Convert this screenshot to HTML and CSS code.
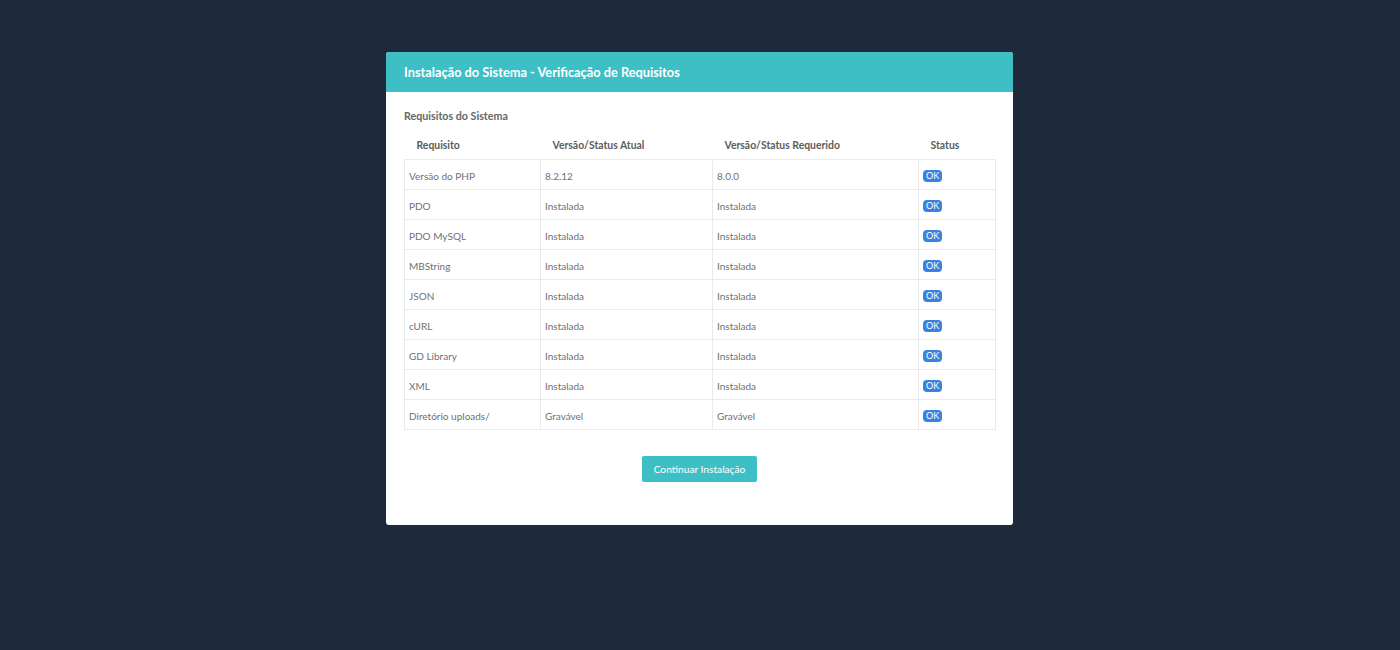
FILE: index.html
```html
<!DOCTYPE html>
<html lang="pt-BR">
<head>
    <meta charset="UTF-8">
    <meta name="viewport" content="width=device-width, initial-scale=1.0">
    <title>Instalação do Sistema</title>
    <link rel="stylesheet" href="styles.css">
</head>
<body>
    <div class="card">
        <div class="card-header">
            <h1>Instalação do Sistema - Verificação de Requisitos</h1>
        </div>
        <div class="card-body">
            <h2>Requisitos do Sistema</h2>
            <table class="req-table">
                <thead>
                    <tr>
                        <th class="c1">Requisito</th>
                        <th class="c2">Versão/Status Atual</th>
                        <th class="c3">Versão/Status Requerido</th>
                        <th class="c4">Status</th>
                    </tr>
                </thead>
                <tbody>
                    <tr><td>Versão do PHP</td><td>8.2.12</td><td>8.0.0</td><td><span class="badge">OK</span></td></tr>
                    <tr><td>PDO</td><td>Instalada</td><td>Instalada</td><td><span class="badge">OK</span></td></tr>
                    <tr><td>PDO MySQL</td><td>Instalada</td><td>Instalada</td><td><span class="badge">OK</span></td></tr>
                    <tr><td>MBString</td><td>Instalada</td><td>Instalada</td><td><span class="badge">OK</span></td></tr>
                    <tr><td>JSON</td><td>Instalada</td><td>Instalada</td><td><span class="badge">OK</span></td></tr>
                    <tr><td>cURL</td><td>Instalada</td><td>Instalada</td><td><span class="badge">OK</span></td></tr>
                    <tr><td>GD Library</td><td>Instalada</td><td>Instalada</td><td><span class="badge">OK</span></td></tr>
                    <tr><td>XML</td><td>Instalada</td><td>Instalada</td><td><span class="badge">OK</span></td></tr>
                    <tr><td>Diretório uploads/</td><td>Gravável</td><td>Gravável</td><td><span class="badge">OK</span></td></tr>
                </tbody>
            </table>
            <div class="actions">
                <button class="btn">Continuar Instalação</button>
            </div>
        </div>
    </div>
</body>
</html>
```

FILE: styles.css
```css
:root {
    --teal: #3dbfc5;
    --bg-dark: #1e293b;
    --badge-blue: #3a82e0;
    --line: #e8eaec;
}

body {
    background-color: var(--bg-dark);
    font-family: Lato, 'Noto Sans', sans-serif;
    margin: 0;
    min-height: 100vh;
    padding-top: 52px;
    box-sizing: border-box;
}

.card {
    width: 627px;
    margin-left: 386px;
    background: #fff;
    border-radius: 3px;
    overflow: hidden;
}

.card-header {
    background: var(--teal);
    height: 40px;
    display: flex;
    align-items: center;
    padding: 0 18px;
}

.card-header h1 {
    margin: 0;
    color: #fff;
    font-size: 12.8px;
    font-weight: bold;
}

.card-body {
    padding: 17px 18px 43px;
}

.card-body h2 {
    margin: 0 0 8px;
    font-size: 10.7px;
    font-weight: bold;
    color: #666;
    line-height: 14px;
}

.req-table {
    width: 591px;
    border-collapse: collapse;
    table-layout: fixed;
    font-size: 10px;
    color: #707070;
}

.req-table th,
.req-table td {
    box-sizing: border-box;
}

.req-table th {
    text-align: left;
    font-weight: bold;
    font-size: 10.4px;
    color: #5c5c5c;
    padding: 0 12px;
    height: 28px;
    border-bottom: 1px solid var(--line);
}

.req-table .c1 { width: 136px; }
.req-table .c2 { width: 172px; }
.req-table .c3 { width: 206px; }
.req-table .c4 { width: 77px; }

.req-table td {
    padding: 3px 4px 0;
    height: 30px;
    border: 1px solid var(--line);
    border-top: none;
}

.badge {
    display: inline-block;
    background: var(--badge-blue);
    color: #fff;
    font-size: 9px;
    padding: 1px 3px;
    border-radius: 4px;
    line-height: 10px;
}

.actions {
    display: flex;
    justify-content: center;
    margin-top: 26px;
}

.btn {
    background: var(--teal);
    color: #fff;
    border: none;
    border-radius: 2px;
    font-family: inherit;
    font-size: 10.2px;
    width: 115px;
    height: 26px;
    cursor: pointer;
}
```
